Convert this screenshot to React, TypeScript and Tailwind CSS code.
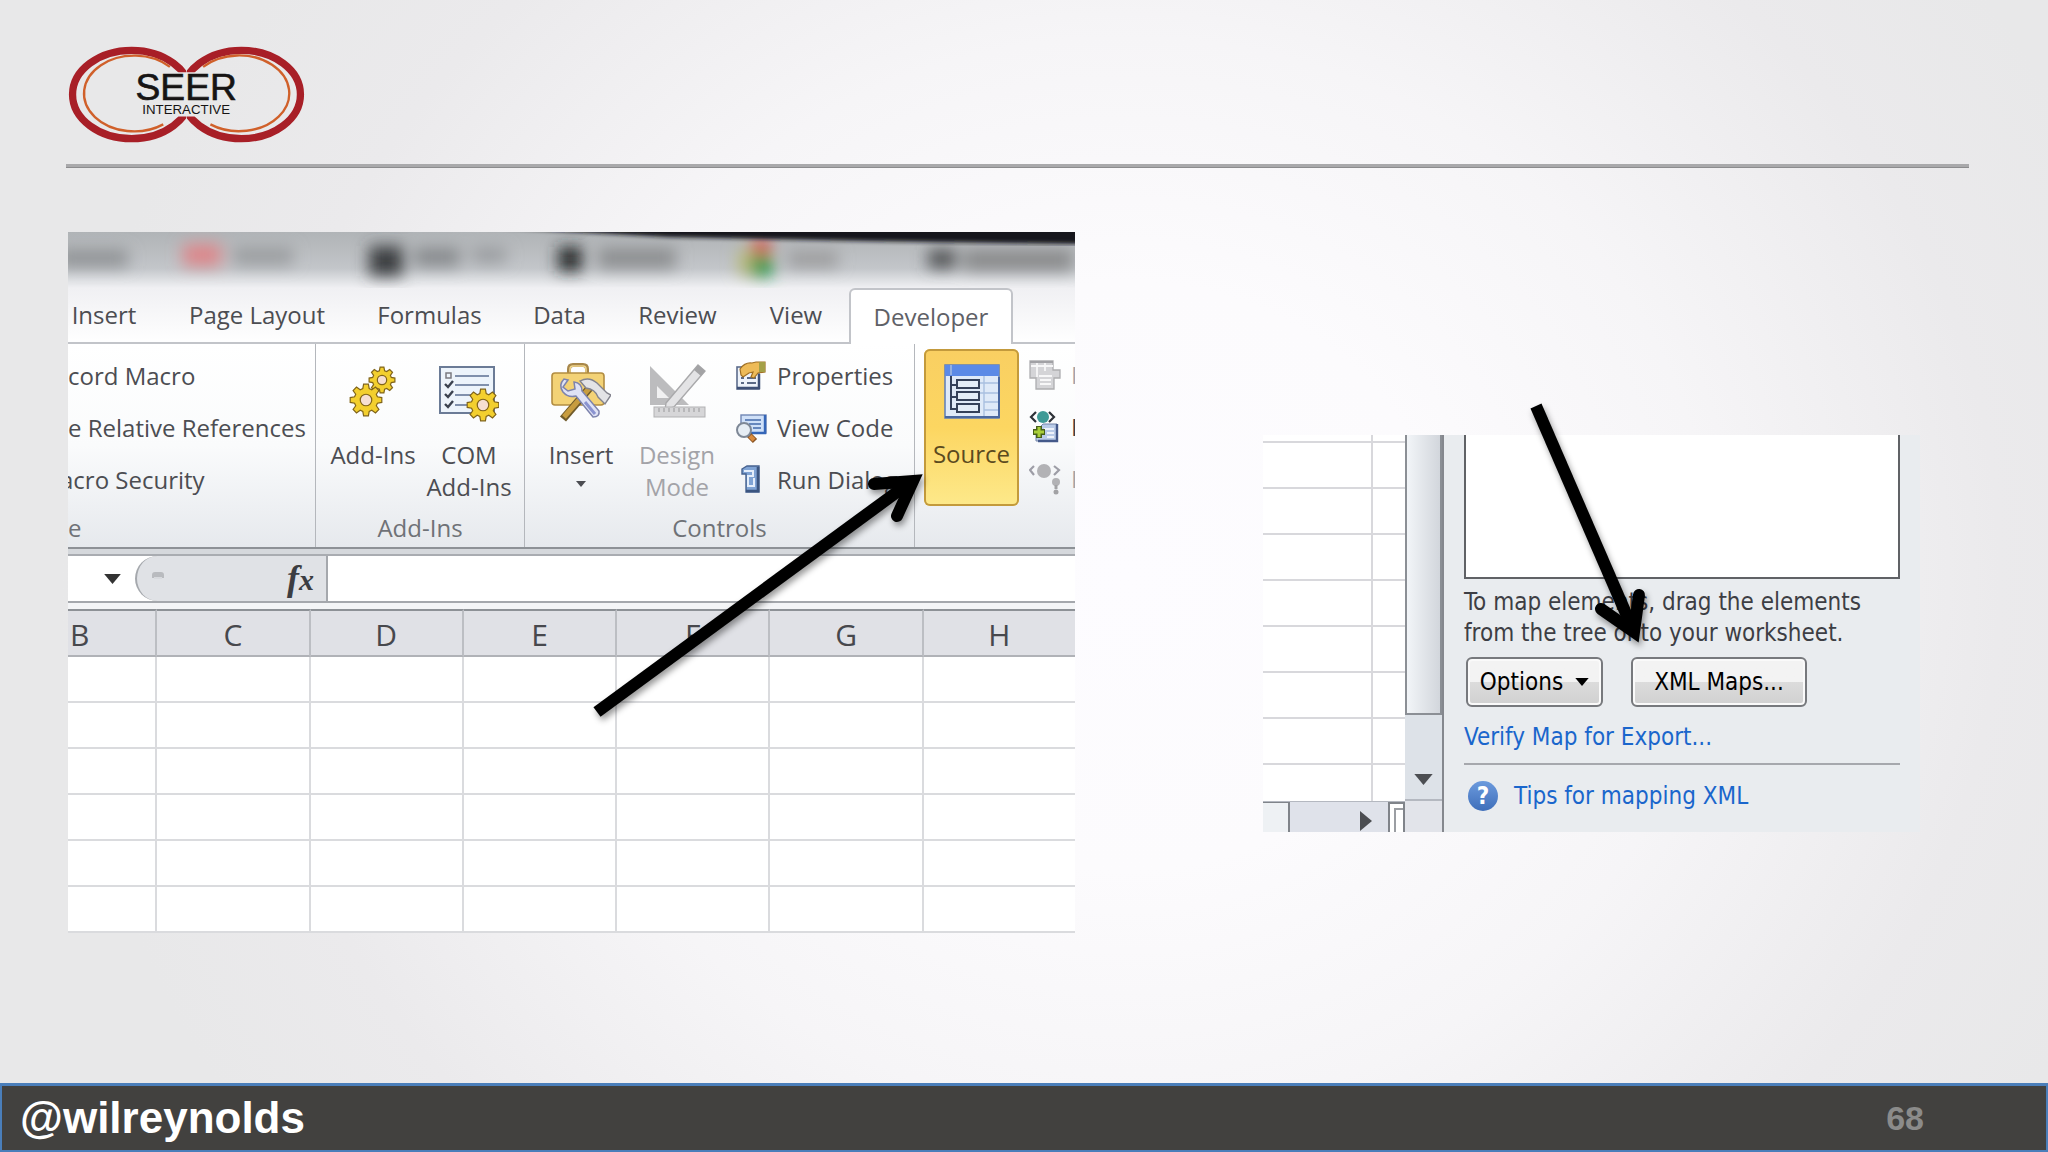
import type { ReactNode } from "react";

const tabs = [
  { label: "Insert", width: "w-[116px]" },
  { label: "Page Layout", width: "w-[190px]" },
  { label: "Formulas", width: "w-[155px]" },
  { label: "Data", width: "w-[105px]" },
  { label: "Review", width: "w-[131px]" },
  { label: "View", width: "w-[106px]" },
];

const columns = ["B", "C", "D", "E", "F", "G", "H"];
const rows = [1, 2, 3, 4, 5, 6];

function gearPoints(cx: number, cy: number, outer: number, inner: number) {
  const teeth = 8;
  const points: string[] = [];
  for (let i = 0; i < teeth; i++) {
    const mid = (i / teeth) * Math.PI * 2;
    [
      [-0.27, inner],
      [-0.15, outer],
      [0.15, outer],
      [0.27, inner],
    ].forEach(([offset, r]) => {
      points.push(`${(cx + Math.sin(mid + offset) * r).toFixed(1)},${(cy - Math.cos(mid + offset) * r).toFixed(1)}`);
    });
  }
  return points.join(" ");
}

function Gear({ cx, cy, r }: { cx: number; cy: number; r: number }) {
  return (
    <g stroke="#80641a" strokeWidth="1.2">
      <polygon points={gearPoints(cx, cy, r, r * 0.74)} fill="#f3cf2e" />
      <circle cx={cx} cy={cy} r={r * 0.36} fill="#f6dfd2" />
    </g>
  );
}

function Logo() {
  return (
    <svg viewBox="55 46 710 292" className="h-[97px] w-[237px]" role="img" aria-label="SEER Interactive">
      <defs>
        <clipPath id="ring-left">
          <path d="M0 0H410V125H340V258H410V450H0Z" />
        </clipPath>
        <clipPath id="ring-right">
          <path d="M840 0H410V125H480V258H410V450H840Z" />
        </clipPath>
      </defs>
      <g fill="none" stroke="#a81f27" strokeWidth="22">
        <ellipse cx="245" cy="192" rx="178" ry="133" clipPath="url(#ring-left)" />
        <ellipse cx="575" cy="192" rx="178" ry="133" clipPath="url(#ring-right)" />
      </g>
      <g fill="none" stroke="#d0602a" strokeWidth="7">
        <path d="M360 109A151 114 0 1 0 340 282" />
        <path d="M460 109A151 114 0 1 1 482 282" />
      </g>
      <g fill="#161414" textAnchor="middle" fontFamily="'Liberation Sans', sans-serif">
        <text x="409" y="209" fontSize="112" stroke="#161414" strokeWidth="2">
          SEER
        </text>
        <text x="409" y="251" fontSize="40">
          INTERACTIVE
        </text>
      </g>
    </svg>
  );
}

function AddInsIcon() {
  return (
    <svg viewBox="0 0 60 60" className="size-[60px]" aria-hidden="true">
      <Gear cx={39} cy={18} r={13} />
      <Gear cx={23} cy={38} r={16} />
    </svg>
  );
}

function ComAddInsIcon() {
  return (
    <svg viewBox="0 0 60 60" className="size-[60px]" aria-hidden="true">
      <rect x="1" y="5" width="54" height="46" fill="#edf4fb" stroke="#6b7b96" strokeWidth="2" />
      <rect x="7" y="11" width="5" height="5" fill="none" stroke="#7a7a80" strokeWidth="1.5" />
      <path d="M16 14H50M16 23H50M16 33H32M16 43H28" stroke="#5c6f92" strokeWidth="1.6" />
      <path d="M6 22l3 3 5-6M6 32l3 3 5-6M6 42l3 3 5-6" fill="none" stroke="#3c4350" strokeWidth="2.4" />
      <Gear cx={44} cy={43} r={16} />
    </svg>
  );
}

function ToolboxIcon() {
  return (
    <svg viewBox="0 0 60 60" className="size-[60px]" aria-hidden="true">
      <path d="M18 12V7q0-4 4-4h10q4 0 4 4v5" fill="none" stroke="#a8874a" strokeWidth="4" />
      <path d="M19 12V7q0-3 3-3h10q3 0 3 3v5" fill="none" stroke="#f0d58c" strokeWidth="1.5" />
      <path d="M4 11H50q3 0 3 3V40q0 3-3 3H4q-3 0-3-3V14q0-3 3-3Z" fill="#f3d276" stroke="#b28d42" strokeWidth="1.6" />
      <path d="M12 57L42 22" stroke="#6f5a2a" strokeWidth="8" />
      <path d="M13 55L42 22" stroke="#c79c3f" strokeWidth="5" />
      <path d="M29 19q9-5 17 2l10 10 4 2-6 9-7-7q-3-8-12-9Z" fill="#e3e3e6" stroke="#83838d" strokeWidth="1.4" />
      <path
        d="M17 18l-5 7 5 4 7-2-1-7q8 1 8 9l17 20q1 6-6 6L25 34q-8 2-13-4-5-7 1-13Z"
        fill="#dfe2f5"
        stroke="#7d83ad"
        strokeWidth="1.5"
      />
      <path d="M34 40l10 12" stroke="#8a93d0" strokeWidth="3" />
    </svg>
  );
}

function DesignIcon() {
  return (
    <svg viewBox="0 0 60 60" className="size-[60px]" aria-hidden="true">
      <path d="M3 4L42 43H3Z" fill="#bcbcbe" />
      <path d="M10 24L22 36H10Z" fill="#f1f1f2" />
      <path d="M19 41L51 3l7 6L27 45l-9 3Z" fill="#e3e3e5" stroke="#a9a9ab" strokeWidth="1.4" />
      <path d="M47 8L51 3l7 6-4 5Z" fill="#a3a3a5" />
      <rect x="7" y="45" width="51" height="10" fill="#d6d6d8" stroke="#b1b1b3" />
      <path d="M12 46v4M17 46v4M22 46v4M27 46v4M32 46v4M37 46v4M42 46v4M47 46v4M52 46v4" stroke="#98989a" />
    </svg>
  );
}

function SourceIcon() {
  return (
    <svg viewBox="0 0 58 56" className="h-[56px] w-[58px]" aria-hidden="true">
      <rect x="2" y="2" width="54" height="53" fill="#dfeaf8" stroke="#5d7db8" strokeWidth="1.5" />
      <rect x="2" y="2" width="54" height="11" fill="#5b8ae6" />
      <path d="M8 2V12M41 13V55M13 20H56M13 30H56M41 39H56M41 47H56" stroke="#a9c0e0" strokeWidth="1.4" />
      <path d="M2 54H56V14" fill="none" stroke="#4a68a0" strokeWidth="2" />
      <path d="M8 13V46H14M8 22H14M8 34H14" fill="none" stroke="#33415c" strokeWidth="2" />
      <g fill="#e3edf8" stroke="#34415a" strokeWidth="2">
        <rect x="14" y="17" width="22" height="8" />
        <rect x="14" y="29" width="22" height="8" />
        <rect x="14" y="41" width="22" height="8" />
      </g>
    </svg>
  );
}

function PropertiesIcon() {
  return (
    <svg viewBox="0 0 32 32" className="size-8" aria-hidden="true">
      <rect x="2" y="7" width="22" height="22" fill="#eef3fa" stroke="#5c6c8c" strokeWidth="1.6" />
      <path d="M2 28H24V14" fill="none" stroke="#3e5076" strokeWidth="2.5" />
      <path d="M6 18h3M6 23h3M12 18h9M12 23h9" stroke="#5b6a86" strokeWidth="2" />
      <path d="M5 9q5-7 12-6l4-1h9v10l-7 1-4 5-3-1 2-5-4 1-6 4-2-2Z" fill="#eebb58" stroke="#a06f22" strokeWidth="1.2" />
      <path d="M24 2h6v10h-6Z" fill="#a4a047" />
    </svg>
  );
}

function ViewCodeIcon() {
  return (
    <svg viewBox="0 0 32 32" className="size-8" aria-hidden="true">
      <rect x="6" y="3" width="25" height="18" fill="#cfe0f8" stroke="#6f86b4" strokeWidth="1.4" />
      <path d="M30 3V21H14" fill="none" stroke="#3566b8" strokeWidth="2.4" />
      <path d="M10 8H26M14 12H26M18 16H26" stroke="#6687bd" strokeWidth="1.8" />
      <path d="M14 23l6 6" stroke="#8a5423" strokeWidth="6" />
      <path d="M15 24l4 4" stroke="#d98a3c" strokeWidth="4" />
      <circle cx="9" cy="18" r="7" fill="#e6edf4" stroke="#7e8896" strokeWidth="2" />
    </svg>
  );
}

function RunDialogIcon() {
  return (
    <svg viewBox="0 0 32 32" className="size-8" aria-hidden="true">
      <path d="M7 5L12 2h12V28H11V10H7Z" fill="#7fa3d4" stroke="#45618f" strokeWidth="1.4" />
      <path d="M23 3V27H11" fill="none" stroke="#3b5580" strokeWidth="2.6" />
      <path d="M9 7h9v5h-5v10h6v-8" fill="none" stroke="#e4eefb" strokeWidth="2" />
    </svg>
  );
}

function MapPropertiesIcon() {
  return (
    <svg viewBox="0 0 32 32" className="size-8 shrink-0" aria-hidden="true">
      <path d="M1 2H24V11H31V19H25V30H7V19H1Z" fill="#d4d4d7" stroke="#adadb0" strokeWidth="1.3" />
      <path d="M2 7H24M8 2V18M16 2V12M10 17H23M11 21H22M11 25H22" stroke="#f7f7f8" strokeWidth="1.8" />
      <path d="M1 3H24" stroke="#a1a1a5" strokeWidth="2" />
    </svg>
  );
}

function ExpansionIcon() {
  return (
    <svg viewBox="0 0 32 32" className="size-8 shrink-0" aria-hidden="true">
      <path d="M14 13H28V30H7V20Z" fill="#b9cbe8" stroke="#7284a8" />
      <path d="M28 13V30H9" fill="none" stroke="#44598a" strokeWidth="2.4" />
      <path d="M15 18H25M18 22H25M18 26H25" stroke="#fff" strokeWidth="1.6" />
      <circle cx="14" cy="6" r="6" fill="#3f9a96" />
      <path d="M7 1L2 6l5 5M20 1l5 5-5 5" fill="none" stroke="#2d3138" strokeWidth="2.2" />
      <path d="M10 15v12M4 21h12" stroke="#47601a" strokeWidth="6" />
      <path d="M10 16v10M5 21h10" stroke="#a9cf3a" strokeWidth="3" />
    </svg>
  );
}

function RefreshIcon() {
  return (
    <svg viewBox="0 0 32 32" className="size-8 shrink-0" aria-hidden="true">
      <circle cx="15" cy="8" r="7" fill="#b2b2b5" />
      <path d="M5 3L1 7l4 5M25 3l5 4-5 5" fill="none" stroke="#9d9da6" strokeWidth="2.2" />
      <circle cx="27" cy="19" r="4" fill="#b2b2b5" />
      <path d="M27 22v4" stroke="#a2a2a5" strokeWidth="3" />
      <circle cx="27" cy="29" r="2.5" fill="#a2a2a5" />
    </svg>
  );
}

function DownArrow({ className }: { className: string }) {
  return (
    <svg viewBox="0 0 10 6" className={className} aria-hidden="true">
      <path d="M0 0H10L5 6Z" fill="currentColor" />
    </svg>
  );
}

/* Blurred browser window showing through the glass title bar */
function GlassTitleBar() {
  return (
    <svg viewBox="0 0 1007 56" preserveAspectRatio="none" className="block h-14 w-full" aria-hidden="true">
      <defs>
        <linearGradient id="glass" x1="0" y1="0" x2="0" y2="1">
          <stop offset="0" stopColor="#b0b4b7" />
          <stop offset="0.35" stopColor="#babdc0" />
          <stop offset="0.65" stopColor="#c3c6ca" />
          <stop offset="0.85" stopColor="#dddfe2" />
          <stop offset="1" stopColor="#f0f0f3" />
        </linearGradient>
        <filter id="soft" x="-20%" y="-50%" width="140%" height="200%">
          <feGaussianBlur stdDeviation="8" />
        </filter>
        <filter id="edge">
          <feGaussianBlur stdDeviation="2" />
        </filter>
      </defs>
      <rect width="1007" height="56" fill="url(#glass)" />
      <g filter="url(#soft)">
        <rect x="-10" y="18" width="70" height="16" fill="#8b8e91" />
        <rect x="115" y="12" width="38" height="22" fill="#dd8589" />
        <rect x="165" y="16" width="60" height="16" fill="#979a9c" />
        <rect x="301" y="14" width="34" height="30" fill="#3b3e41" />
        <rect x="346" y="16" width="46" height="18" fill="#84878a" />
        <rect x="404" y="16" width="34" height="14" fill="#95989b" />
        <rect x="490" y="15" width="24" height="24" fill="#222528" />
        <rect x="530" y="16" width="78" height="20" fill="#8a8c8e" />
        <rect x="670" y="18" width="14" height="24" fill="#b8ba78" />
        <rect x="684" y="8" width="18" height="14" fill="#d8433d" />
        <rect x="684" y="24" width="20" height="20" fill="#1f9440" />
        <rect x="720" y="20" width="50" height="14" fill="#969697" />
        <rect x="860" y="18" width="28" height="18" fill="#4b4d4f" />
        <rect x="895" y="18" width="110" height="20" fill="#868788" />
      </g>
      <path d="M400 -6H1020V12L800 9L600 5Z" fill="#17191b" filter="url(#edge)" />
    </svg>
  );
}

function Arrow({ shaft, head }: { shaft: string; head: string }) {
  return (
    <svg
      className="pointer-events-none absolute left-0 top-0 size-px overflow-visible drop-shadow-[2px_4px_3px_rgba(0,0,0,0.4)]"
      fill="none"
      stroke="#000"
      strokeWidth="12"
      aria-hidden="true"
    >
      <path d={shaft} />
      <path d={head} strokeLinecap="round" strokeLinejoin="miter" />
    </svg>
  );
}

function Group({ label, className, children }: { label: ReactNode; className: string; children: ReactNode }) {
  return (
    <div className={`flex shrink-0 flex-col border-r border-[#b4b7bc] pt-[6px] ${className}`}>
      <div className="flex h-[156px]">{children}</div>
      <div className="pt-[2px] text-center leading-[39px] text-[#6f7277]">{label}</div>
    </div>
  );
}

function BigButton({ icon, children, className = "w-24" }: { icon: ReactNode; children: ReactNode; className?: string }) {
  return (
    <button type="button" className={`flex shrink-0 flex-col items-center ${className}`}>
      <span className="flex h-[89px] items-center pb-[5px]">{icon}</span>
      <span className="whitespace-nowrap leading-8">{children}</span>
    </button>
  );
}

function SmallButton({ icon, label }: { icon: ReactNode; label: string }) {
  return (
    <button type="button" className="flex h-[52px] items-center gap-[10px] whitespace-nowrap">
      {icon}
      {label}
    </button>
  );
}

function Ribbon() {
  return (
    <div className="flex h-[203px] bg-linear-to-b from-white via-[#fafbfc] to-[#e6e9ed]">
      <Group label={<span className="block text-left">e</span>} className="w-[248px] overflow-hidden">
        <div className="flex flex-col items-start whitespace-nowrap">
          <button type="button" className="h-[52px]">cord Macro</button>
          <button type="button" className="h-[52px]">e Relative References</button>
          <button type="button" className="-ml-2 h-[52px]">acro Security</button>
        </div>
      </Group>
      <Group label="Add-Ins" className="w-[209px]">
        <div className="flex pl-[9px]">
          <BigButton icon={<AddInsIcon />}>Add-Ins</BigButton>
          <BigButton icon={<ComAddInsIcon />}>
            COM
            <br />
            Add-Ins
          </BigButton>
        </div>
      </Group>
      <Group label="Controls" className="w-[390px]">
        <div className="flex pl-2">
          <BigButton icon={<ToolboxIcon />}>
            Insert
            <DownArrow className="mx-auto mt-[10px] h-[6px] w-[10px]" />
          </BigButton>
          <BigButton icon={<DesignIcon />} className="w-24 text-[#a3a3a8]">
            Design
            <br />
            Mode
          </BigButton>
        </div>
        <div className="flex flex-col pl-[10px]">
          <SmallButton icon={<PropertiesIcon />} label="Properties" />
          <SmallButton icon={<ViewCodeIcon />} label="View Code" />
          <SmallButton icon={<RunDialogIcon />} label="Run Dialog" />
        </div>
      </Group>
      <div className="flex min-w-0 flex-1 items-start overflow-hidden pl-[9px] pt-[5px]">
        <BigButton
          icon={<SourceIcon />}
          className="h-[157px] w-[95px] rounded-md bg-linear-to-b from-[#f9cf62] via-[#fcd661] to-[#fde98a] text-[#5b4a1e] inset-ring-2 inset-ring-[#c39a3c]"
        >
          Source
        </BigButton>
        <div className="flex flex-col pl-[10px] text-[#a3a3a8]">
          <SmallButton icon={<MapPropertiesIcon />} label="M" />
          <span className="text-[#3f4045]">
            <SmallButton icon={<ExpansionIcon />} label="E" />
          </span>
          <SmallButton icon={<RefreshIcon />} label="R" />
        </div>
      </div>
    </div>
  );
}

function ExcelWindow() {
  return (
    <section className="relative min-w-0 font-['Open_Sans','Noto_Sans',sans-serif] text-2xl text-[#4c4d52]">
      <div className="overflow-hidden bg-white">
        <GlassTitleBar />
        <nav className="flex h-14 bg-linear-to-b from-[#f0f0f3] to-white">
          <div className="-ml-[22px] flex border-b-2 border-[#c2c4c9]">
            {tabs.map((tab) => (
              <button key={tab.label} type="button" className={`shrink-0 whitespace-nowrap ${tab.width}`}>
                {tab.label}
              </button>
            ))}
          </div>
          <button
            type="button"
            className="w-[164px] shrink-0 rounded-t-md border-x-2 border-t-2 border-[#c2c4c9] bg-white text-[#5f6167]"
          >
            Developer
          </button>
          <div className="flex-1 border-b-2 border-[#c2c4c9]" />
        </nav>
        <Ribbon />
        <div className="h-[9px] border-t-2 border-b-2 border-t-[#8d9196] border-b-[#a9acb1] bg-[#d5d8dc]" />
        <div className="flex h-[47px] border-b-2 border-[#a5a8ad] bg-white">
          <button type="button" aria-label="Name box" className="flex w-[67px] shrink-0 items-center justify-end pr-[14px] text-[#333]">
            <DownArrow className="h-[10px] w-[17px]" />
          </button>
          <div className="flex w-[193px] shrink-0 items-center justify-between rounded-l-full border-l-2 border-r-2 border-[#a5a8ad] bg-[#e0e2e6] pl-[14px] pr-3">
            <svg viewBox="0 0 14 10" className="mb-2 h-[10px] w-[14px]" aria-hidden="true">
              <path d="M1 8V5Q1 2 4 2H10Q13 2 13 5V8Z" fill="#b9bbbf" />
              <path d="M3 8H11" stroke="#d8dade" strokeWidth="2" />
            </svg>
            <button type="button" className="font-['Liberation_Serif',serif] text-4xl font-bold italic leading-none text-[#3c3d42]">
              f<span className="text-3xl">x</span>
            </button>
          </div>
          <input aria-label="Formula bar" className="min-w-0 flex-1 bg-white outline-none" />
        </div>
        <div className="h-[6px] bg-[#f4f5f7]" />
        <table className="-ml-16 w-[calc(100%+66px)] table-fixed border-separate border-spacing-0">
          <thead>
            <tr>
              {columns.map((column) => (
                <th
                  key={column}
                  className="h-12 border-t-2 border-r-2 border-b-2 border-t-[#8d9196] border-r-[#bcbec3] border-b-[#b0b2b7] bg-[#e0e1e6] p-0 pt-1 text-3xl font-normal leading-none text-[#47484d]"
                >
                  {column}
                </th>
              ))}
            </tr>
          </thead>
          <tbody>
            {rows.map((row) => (
              <tr key={row}>
                {columns.map((column) => (
                  <td key={column} className="h-[46px] border-r-2 border-b-2 border-[#dadbde] bg-white" />
                ))}
              </tr>
            ))}
          </tbody>
        </table>
      </div>
      <Arrow shaft="M529 480L844 249" head="M806 252L845 249L829 284" />
    </section>
  );
}

function SheetCorner() {
  return (
    <div className="flex w-[142px] shrink-0 flex-col bg-white">
      <table className="w-full table-fixed border-separate border-spacing-0">
        <tbody>
          <tr>
            <td className="h-2 w-[110px] border-r-2 border-b-2 border-[#d8d8dc]" />
            <td className="border-b-2 border-[#d8d8dc]" />
          </tr>
          {[1, 2, 3, 4, 5, 6, 7].map((row) => (
            <tr key={row}>
              <td className="h-[46px] border-r-2 border-b-2 border-[#d8d8dc]" />
              <td className="border-b-2 border-[#d8d8dc]" />
            </tr>
          ))}
          <tr>
            <td className="h-9 border-r-2 border-[#d8d8dc]" />
            <td />
          </tr>
        </tbody>
      </table>
      <div className="flex flex-1 items-stretch border-t border-[#b4b8c0] bg-[#dfe2ea]">
        <div className="w-[27px] border-r-2 border-t border-[#80848a] bg-[#eef1f4]" />
        <div className="flex flex-1 items-center justify-end pr-4">
          <svg viewBox="0 0 12 20" className="mt-2 h-5 w-3" aria-hidden="true">
            <path d="M0 0L12 10L0 20Z" fill="#4c4e52" />
          </svg>
        </div>
        <div className="w-[17px] border-2 border-b-0 border-[#80848a] bg-white pl-1 pt-1">
          <div className="h-full border-l-2 border-t-2 border-[#9b9ea3]" />
        </div>
      </div>
    </div>
  );
}

function XmlSourcePane() {
  return (
    <section className="relative mt-[203px] flex min-w-0 bg-[#e9ecef] font-['DejaVu_Sans_Condensed','Noto_Sans',sans-serif] text-2xl text-[#3d3e44]">
      <SheetCorner />
      <div className="flex w-[37px] shrink-0 flex-col bg-[#dde2e8]">
        <div className="h-[280px] border-x-2 border-b-2 border-[#8b8f95] bg-linear-to-r from-[#f2f5f8] to-[#d2d6dc]" />
        <div className="flex flex-1 items-end justify-center border-b-2 border-[#b4b8c0] pb-[14px] text-[#4c4e52]">
          <DownArrow className="h-[11px] w-[21px]" />
        </div>
        <div className="h-[31px] bg-[#e2e4ea]" />
      </div>
      <div className="min-w-0 flex-1 border-l-2 border-[#85888e] pb-5 pl-5 pr-5">
        <div className="h-36 border-2 border-t-0 border-[#606266] bg-white" />
        <p className="mt-2 whitespace-nowrap leading-[31px]">
          To map elements, drag the elements
          <br />
          from the tree onto your worksheet.
        </p>
        <div className="mt-2 flex gap-7 pl-[2px] text-black">
          <button
            type="button"
            className="flex h-[50px] w-[137px] items-center justify-center gap-3 rounded-md border-2 border-[#77797d] bg-linear-to-b from-[#f3f3f3] from-50% via-[#dcdcdc] via-50% to-[#d0d0d0] shadow-[inset_0_0_0_2px_#fafafa]"
          >
            Options
            <DownArrow className="h-2 w-[14px] shrink-0" />
          </button>
          <button
            type="button"
            className="h-[50px] w-[176px] rounded-md border-2 border-[#77797d] bg-linear-to-b from-[#f3f3f3] from-50% via-[#dcdcdc] via-50% to-[#d0d0d0] shadow-[inset_0_0_0_2px_#fafafa]"
          >
            XML Maps...
          </button>
        </div>
        <a href="#verify" className="mt-[14px] block leading-8 text-[#1a66cc]">
          Verify Map for Export...
        </a>
        <div className="mt-[10px] h-[2px] bg-[#a6a8ad]" />
        <a href="#tips" className="mt-[15px] flex items-center gap-4 pl-1 leading-8 text-[#1a66cc]">
          <span className="flex size-[30px] items-center justify-center rounded-full bg-linear-to-b from-[#6c9add] to-[#3f6fba] font-bold leading-none text-white">
            ?
          </span>
          Tips for mapping XML
        </a>
      </div>
      <Arrow shaft="M273 -29L371 197" head="M338 174L371 197L376 160" />
    </section>
  );
}

export default function App() {
  return (
    <div className="flex min-h-screen flex-col bg-[radial-gradient(ellipse_52%_85%_at_55%_50%,#fdfcff_0%,#fcfbfd_30%,#f6f5f7_55%,#ebeaec_82%,#e8e8e9_100%)]">
      <header className="pl-[66px] pr-[79px] pt-[46px]">
        <div className="flex h-[118px] items-start pl-[2px]">
          <Logo />
        </div>
        <div className="h-1 border-b border-[#8c8c8e] bg-[#a9a9ab]" />
      </header>

      <main className="grid flex-1 grid-cols-[1007fr_657fr] items-start gap-[188px] pb-16 pl-[68px] pr-32 pt-16">
        <ExcelWindow />
        <XmlSourcePane />
      </main>

      <footer className="flex h-[69px] items-center justify-between border-2 border-t-[3px] border-[#4a7eba] bg-[#42413f] pl-[18px] pr-[122px] font-['Liberation_Sans',sans-serif] font-bold">
        <span className="text-[44px] leading-none text-white">@wilreynolds</span>
        <span className="text-[34px] leading-none text-[#8b8b8a]">68</span>
      </footer>
    </div>
  );
}
